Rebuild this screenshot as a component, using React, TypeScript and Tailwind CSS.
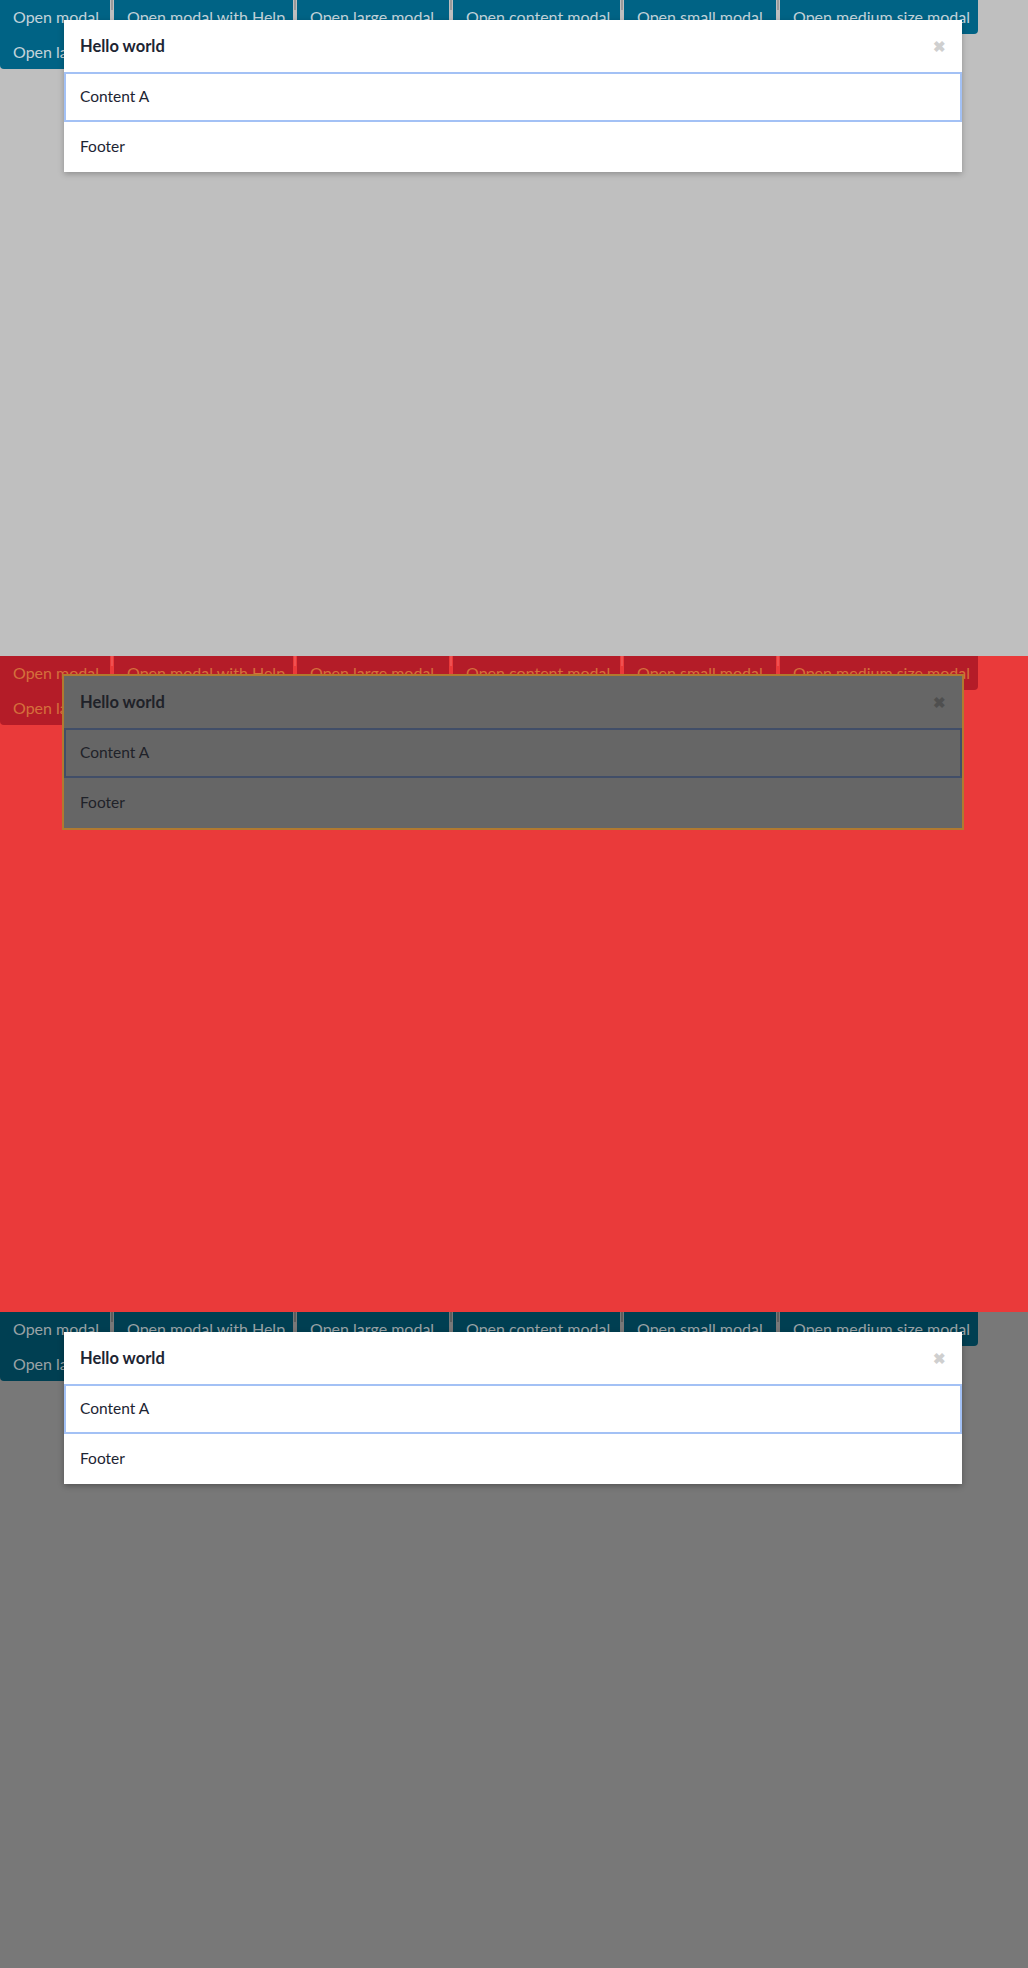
import React from 'react';

type Theme = {
  page: string;
  button: string;
  buttonText: string;
  gapMark: string;
  modal: string;
  modalRing: string;
  contentBorder: string;
  close: string;
  text: string;
};

const themes: Theme[] = [
  {
    page: 'bg-[#bfbfbf]',
    button: 'bg-[#006385]',
    buttonText: 'text-[#c3d3da]',
    gapMark: 'bg-[#9a9a9a]',
    modal: 'bg-white shadow-[0_2px_6px_rgba(0,0,0,0.25)]',
    modalRing: '',
    contentBorder: 'border-[#a3c1f5]',
    close: 'text-[#cfcfcf]',
    text: 'text-[#1d2533]',
  },
  {
    page: 'bg-[#ea3a3a]',
    button: 'bg-[#b41c28]',
    buttonText: 'text-[#d4703c]',
    gapMark: 'bg-[#f05050]',
    modal: 'bg-[#666666]',
    modalRing: 'outline-2 outline-[#b07a30]',
    contentBorder: 'border-[#414e68]',
    close: 'text-[#4f4f4f]',
    text: 'text-[#1f2229]',
  },
  {
    page: 'bg-[#787878]',
    button: 'bg-[#003f52]',
    buttonText: 'text-[#9aa3a6]',
    gapMark: 'bg-[#5e5e5e]',
    modal: 'bg-white shadow-[0_2px_6px_rgba(0,0,0,0.3)]',
    modalRing: '',
    contentBorder: 'border-[#a3c1f5]',
    close: 'text-[#cfcfcf]',
    text: 'text-[#1d2533]',
  },
];

const firstRow = [
  { label: 'Open modal', w: 'w-[110px]' },
  { label: 'Open modal with Help', w: 'w-[179px]' },
  { label: 'Open large modal', w: 'w-[152px]' },
  { label: 'Open content modal', w: 'w-[167px]' },
  { label: 'Open small modal', w: 'w-[152px]' },
  { label: 'Open medium size modal', w: 'w-[198px]' },
];

function Gap({ t }: { t: Theme }) {
  return (
    <span className="w-[4px] flex justify-center">
      <span className={`w-[2px] h-[10px] ${t.gapMark}`} />
    </span>
  );
}

function Panel({ t }: { t: Theme }) {
  return (
    <section className={`relative h-[656px] overflow-hidden ${t.page}`}>
      {/* button bar */}
      <div className="flex flex-col">
        <div className="flex h-[34px]">
          {firstRow.map((b, i) => (
            <React.Fragment key={b.label}>
              {i > 0 && <Gap t={t} />}
              <button
                className={`${b.w} h-full pl-[13px] text-left text-[16px] rounded-[4px] rounded-t-none ${t.button} ${t.buttonText} ${
                  i === 0 ? 'rounded-bl-none' : ''
                }`}
              >
                {b.label}
              </button>
            </React.Fragment>
          ))}
        </div>
        <div className="flex h-[35px]">
          <button
            className={`w-[230px] h-full pl-[13px] text-left text-[16px] rounded-b-[4px] ${t.button} ${t.buttonText}`}
          >
            Open large content modal
          </button>
        </div>
      </div>

      {/* modal */}
      <div
        className={`absolute left-[64px] top-[20px] w-[898px] ${t.modal} ${t.modalRing} ${t.text}`}
      >
        <div className="h-[52px] flex items-center justify-between pl-[16px] pr-[16px]">
          <span className="text-[16.5px] font-bold">Hello world</span>
          <span className={`text-[15px] font-bold leading-none ${t.close}`}>✖</span>
        </div>
        <div className={`h-[50px] flex items-center pl-[14px] border-2 ${t.contentBorder}`}>
          <span className="text-[15.5px]">Content A</span>
        </div>
        <div className="h-[50px] flex items-center pl-[16px]">
          <span className="text-[15.5px]">Footer</span>
        </div>
      </div>
    </section>
  );
}

export default function App() {
  return (
    <div className="w-[1028px] font-['Lato','Open_Sans',sans-serif]">
      {themes.map((t, i) => (
        <Panel key={i} t={t} />
      ))}
    </div>
  );
}
